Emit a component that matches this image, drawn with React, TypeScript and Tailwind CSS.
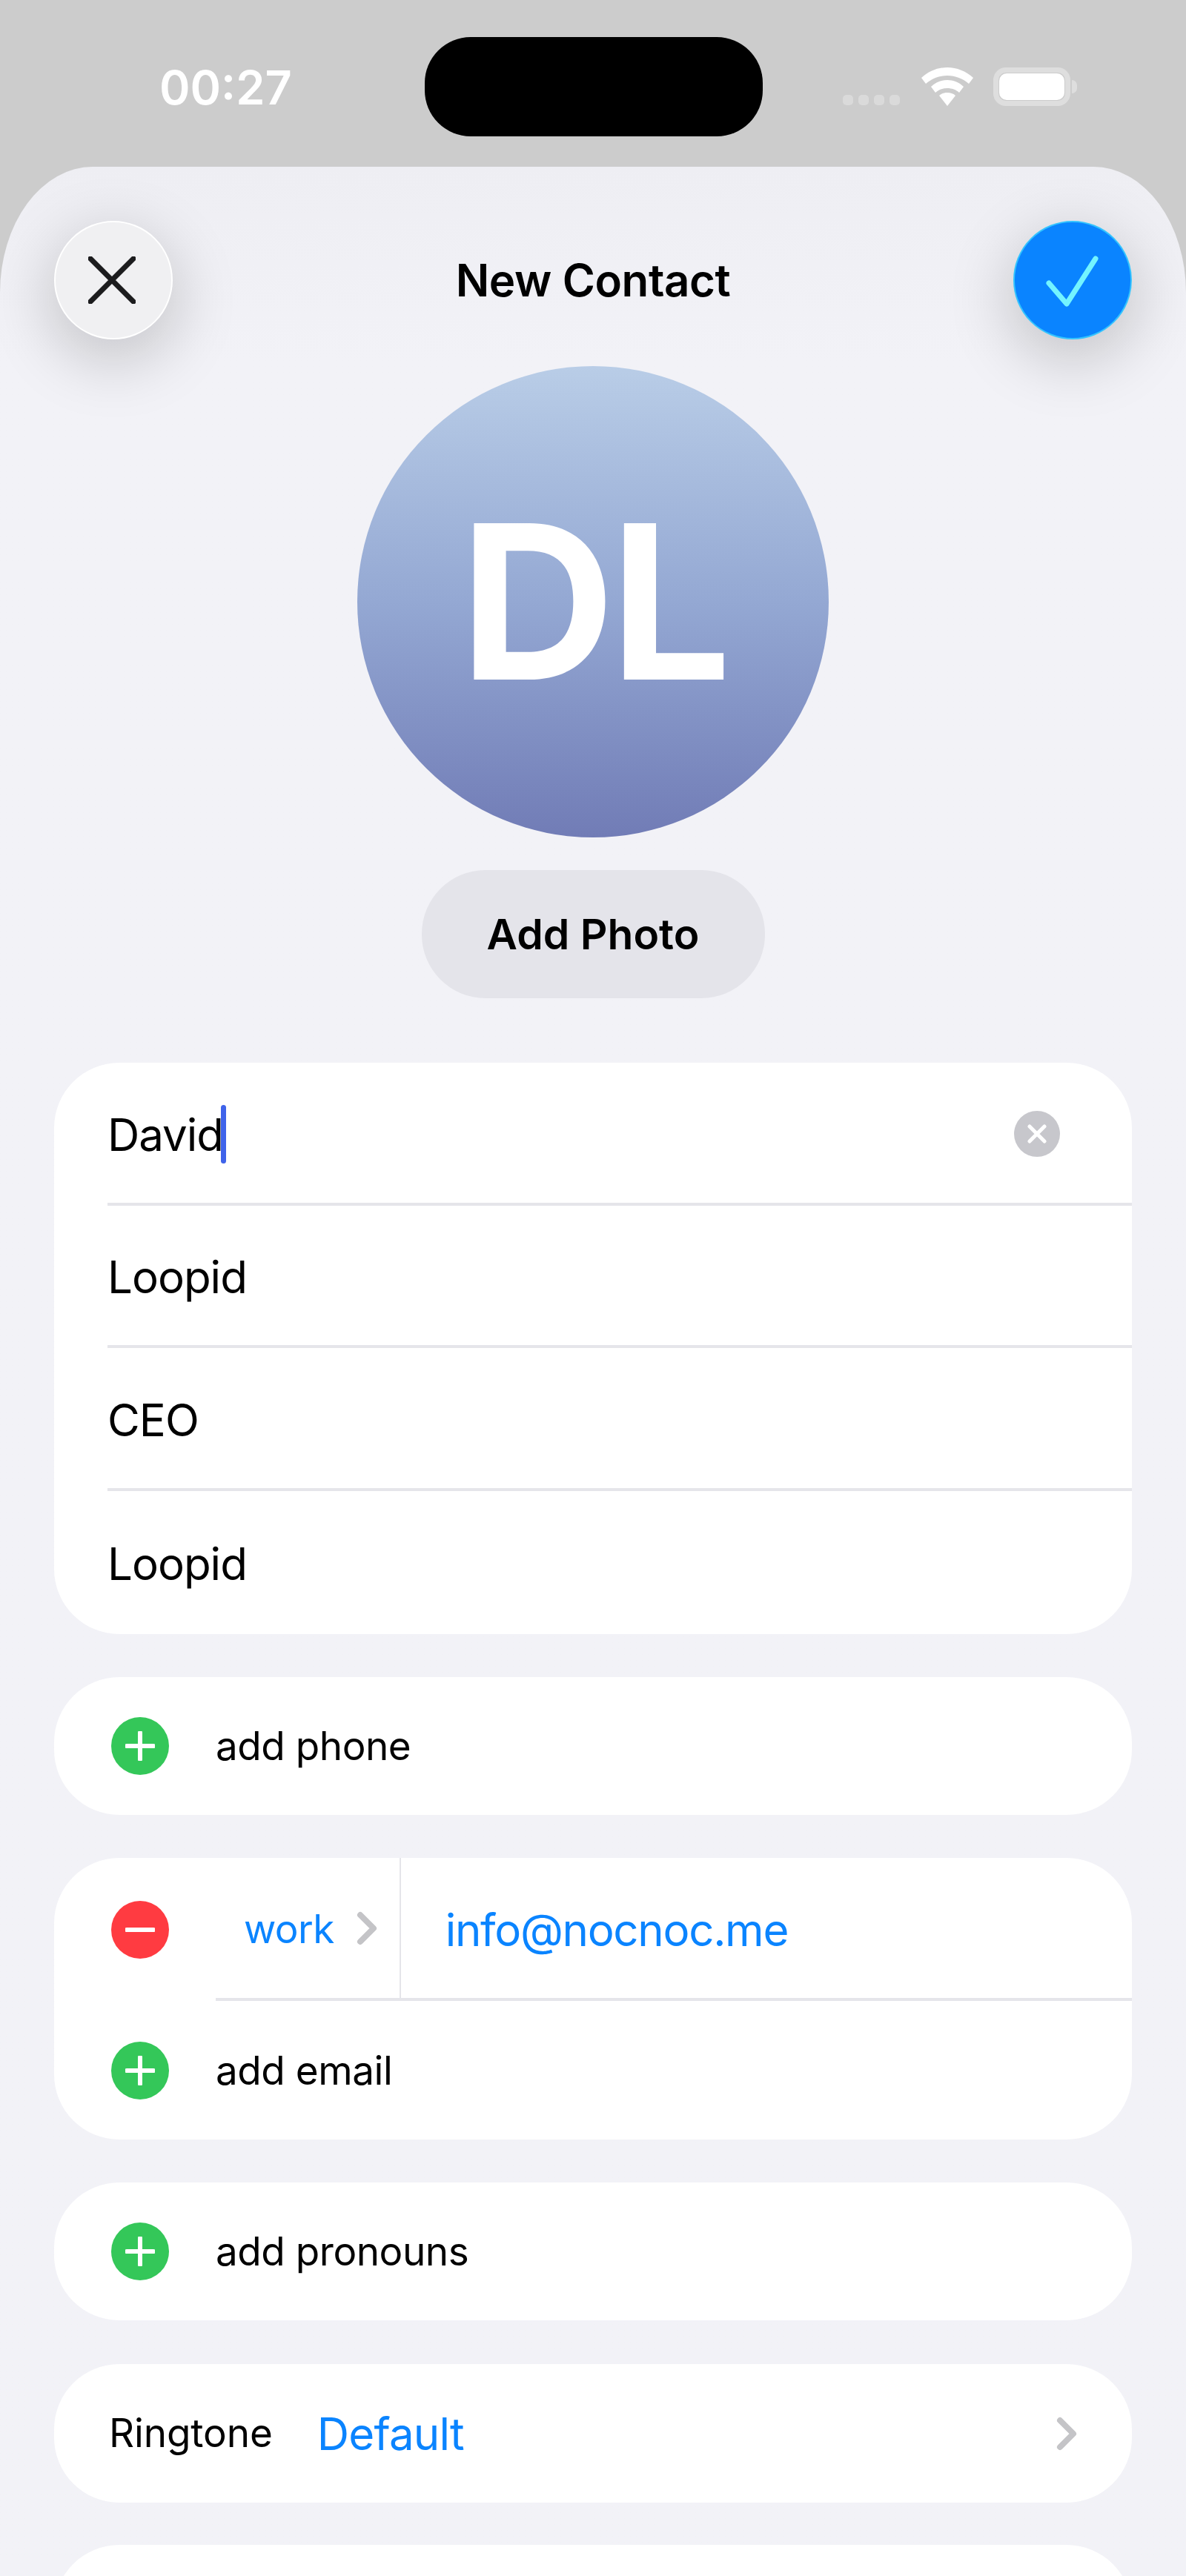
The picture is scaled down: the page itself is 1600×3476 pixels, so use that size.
// App.tsx
const FONT = "font-['Inter','Noto_Sans',sans-serif]";

function RoundIcon({ color, minus }: { color: string; minus?: boolean }) {
  return (
    <span className={`flex h-[78px] w-[78px] shrink-0 items-center justify-center rounded-full ${color}`}>
      <svg width="40" height="40" viewBox="0 0 40 40" fill="none" stroke="#fff" strokeWidth="6" strokeLinecap="round">
        <path d="M2 20h36" />
        {!minus && <path d="M20 2v36" />}
      </svg>
    </span>
  );
}

function Chevron({ className }: { className?: string }) {
  return (
    <svg className={className} width="28" height="46" viewBox="0 0 28 46" fill="none" stroke="#c4c4c7" strokeWidth="8" strokeLinecap="round" strokeLinejoin="round">
      <path d="M5 5l18 18L5 41" />
    </svg>
  );
}

function AddRow({ label, className }: { label: string; className?: string }) {
  return (
    <div className={`flex items-center pl-[77px] ${className ?? ""}`}>
      <RoundIcon color="bg-[#34c759]" />
      <span className="ml-[63px] pt-[2px] text-[53px] tracking-[-0.45px] text-black">{label}</span>
    </div>
  );
}

function NameRow({ value, last, active }: { value: string; last?: boolean; active?: boolean }) {
  return (
    <div className="ml-[72px]">
      <div className={`flex h-[192.5px] items-center ${last ? "" : "border-b-[4px] border-[#e5e5ea]"}`}>
        <span className="pt-[5px] text-[60px] tracking-[-1px] text-black">{value}</span>
        {active && (
          <>
            <span className="ml-[-3px] mt-[4px] h-[79px] w-[7px] rounded-full bg-[#3f63ea]" />
            <span className="ml-auto mr-[97px] mt-[4px] flex h-[62px] w-[62px] items-center justify-center rounded-full bg-[#c7c7cc]">
              <svg width="30" height="30" viewBox="0 0 30 30" fill="none" stroke="#fff" strokeWidth="5" strokeLinecap="round">
                <path d="M5 5l20 20M25 5L5 25" />
              </svg>
            </span>
          </>
        )}
      </div>
    </div>
  );
}

function StatusBar() {
  return (
    <div className="relative flex h-[225px] items-start">
      <span className="ml-[215px] mt-[81px] text-[63px] font-semibold leading-[75px] text-white">00:27</span>
      <div className="ml-[179px] mt-[50px] h-[134px] w-[456px] rounded-[62px] bg-black" />
      <div className="ml-[108px] mt-[91px] flex items-end">
        <div className="mb-[1px] flex gap-[7px]">
          {[0, 1, 2, 3].map((i) => (
            <span key={i} className="h-[14px] w-[14px] rounded-[5px] bg-[#dadada]" />
          ))}
        </div>
        <svg className="ml-[29px]" width="70" height="52" viewBox="0 0 70 52" fill="#fff">
          <path d="M35 0C22 0 10 5 0 14l6 8c8-7 18-11 29-11s21 4 29 11l6-8C60 5 48 0 35 0z" />
          <path d="M35 17c-8 0-16 3-22 9l6 8c4-4 10-6 16-6s12 2 16 6l6-8c-6-6-14-9-22-9z" />
          <path d="M35 34c-4 0-8 1-11 4l11 14 11-14c-3-3-7-4-11-4z" />
        </svg>
        <div className="ml-[27px] flex items-center">
          <div className="flex h-[52px] w-[104px] items-center justify-center rounded-[17px] border-[7px] border-[#dedede]">
            <div className="h-[36px] w-[88px] rounded-[10px] bg-white" />
          </div>
          <span className="ml-[2px] h-[18px] w-[7px] rounded-r-full bg-[#dedede]" />
        </div>
      </div>
    </div>
  );
}

function Header() {
  return (
    <div className="flex h-[160px] items-center justify-between px-[73px]">
      <button className="flex h-[160px] w-[160px] items-center justify-center rounded-full border-[2px] border-white bg-[#f0f0f2] shadow-[0_24px_80px_10px_rgba(0,0,0,0.17)]">
        <svg className="mr-[4px]" width="64" height="64" viewBox="0 0 64 64" fill="none" stroke="#1c1c1e" strokeWidth="7" strokeLinecap="round">
          <path d="M3 3l58 58M61 3L3 61" />
        </svg>
      </button>
      <h1 className="text-[60px] font-semibold tracking-[-0.4px] text-black">New Contact</h1>
      <button className="flex h-[160px] w-[160px] items-center justify-center rounded-full border-[2px] border-[#33c4ff] bg-[#0a84ff] shadow-[0_24px_80px_10px_rgba(0,0,0,0.17)]">
        <svg width="72" height="72" viewBox="0 0 72 72" fill="none" stroke="#73f4ff" strokeWidth="7" strokeLinecap="round" strokeLinejoin="round">
          <path d="M4 40l24 28L67 7" />
        </svg>
      </button>
    </div>
  );
}

export default function App() {
  return (
    <div className={`${FONT} h-[3476px] w-[1600px] overflow-hidden bg-[#cccccc]`}>
      <StatusBar />
      <div className="h-[3251px] overflow-hidden rounded-t-[125px_170px] bg-gradient-to-b from-[#eeeef3] to-[#f2f2f7] to-[8%] pt-[73px]">
        <Header />

        <div className="mt-[36px] flex flex-col items-center">
          <div className="flex h-[636px] w-[636px] items-center justify-center rounded-full bg-gradient-to-b from-[#b9cde7] via-[#94a8d3] to-[#717cb6]">
            <span className="text-[290px] font-bold leading-none tracking-[-7px] text-white">DL</span>
          </div>
          <button className="mt-[44px] h-[173px] w-[463px] rounded-[86px] bg-[#e4e4ea] text-[57px] font-semibold text-black">
            Add Photo
          </button>
        </div>

        <div className="mx-[73px] mt-[87px] flex flex-col">
          <section className="h-[771px] overflow-hidden rounded-[88px] bg-white">
            <NameRow value="David" active />
            <NameRow value="Loopid" />
            <NameRow value="CEO" />
            <NameRow value="Loopid" last />
          </section>

          <section className="mt-[58px] rounded-[88px] bg-white">
            <AddRow label="add phone" className="h-[186px]" />
          </section>

          <section className="mt-[58px] h-[380px] overflow-hidden rounded-[88px] bg-white">
            <div className="flex h-[193px] items-center">
              <div className="ml-[77px]">
                <RoundIcon color="bg-[#ff3b41]" minus />
              </div>
              <div className="ml-[63px] flex h-full flex-1 items-center border-b-[4px] border-[#e5e5ea]">
                <span className="ml-[38px] pt-[4px] text-[53px] tracking-[-0.6px] text-[#0a84ff]">work</span>
                <Chevron className="ml-[30px]" />
                <span className="ml-[30px] h-full w-[2px] bg-[#e5e5ea]" />
                <span className="ml-[60px] pt-[4px] text-[60px] tracking-[-1.3px] text-[#0a84ff]">info@nocnoc.me</span>
              </div>
            </div>
            <AddRow label="add email" className="h-[187px]" />
          </section>

          <section className="mt-[58px] rounded-[88px] bg-white">
            <AddRow label="add pronouns" className="h-[186px]" />
          </section>

          <section className="mt-[59px] flex h-[187px] items-center rounded-[88px] bg-white">
            <span className="ml-[74px] text-[53px] tracking-[-0.1px] text-black">Ringtone</span>
            <span className="ml-[60px] text-[60px] tracking-[-0.8px] text-[#0a84ff]">Default</span>
            <Chevron className="ml-auto mr-[74px]" />
          </section>

          <section className="mt-[57px] h-[186px] rounded-[88px] bg-white" />
        </div>
      </div>
    </div>
  );
}
